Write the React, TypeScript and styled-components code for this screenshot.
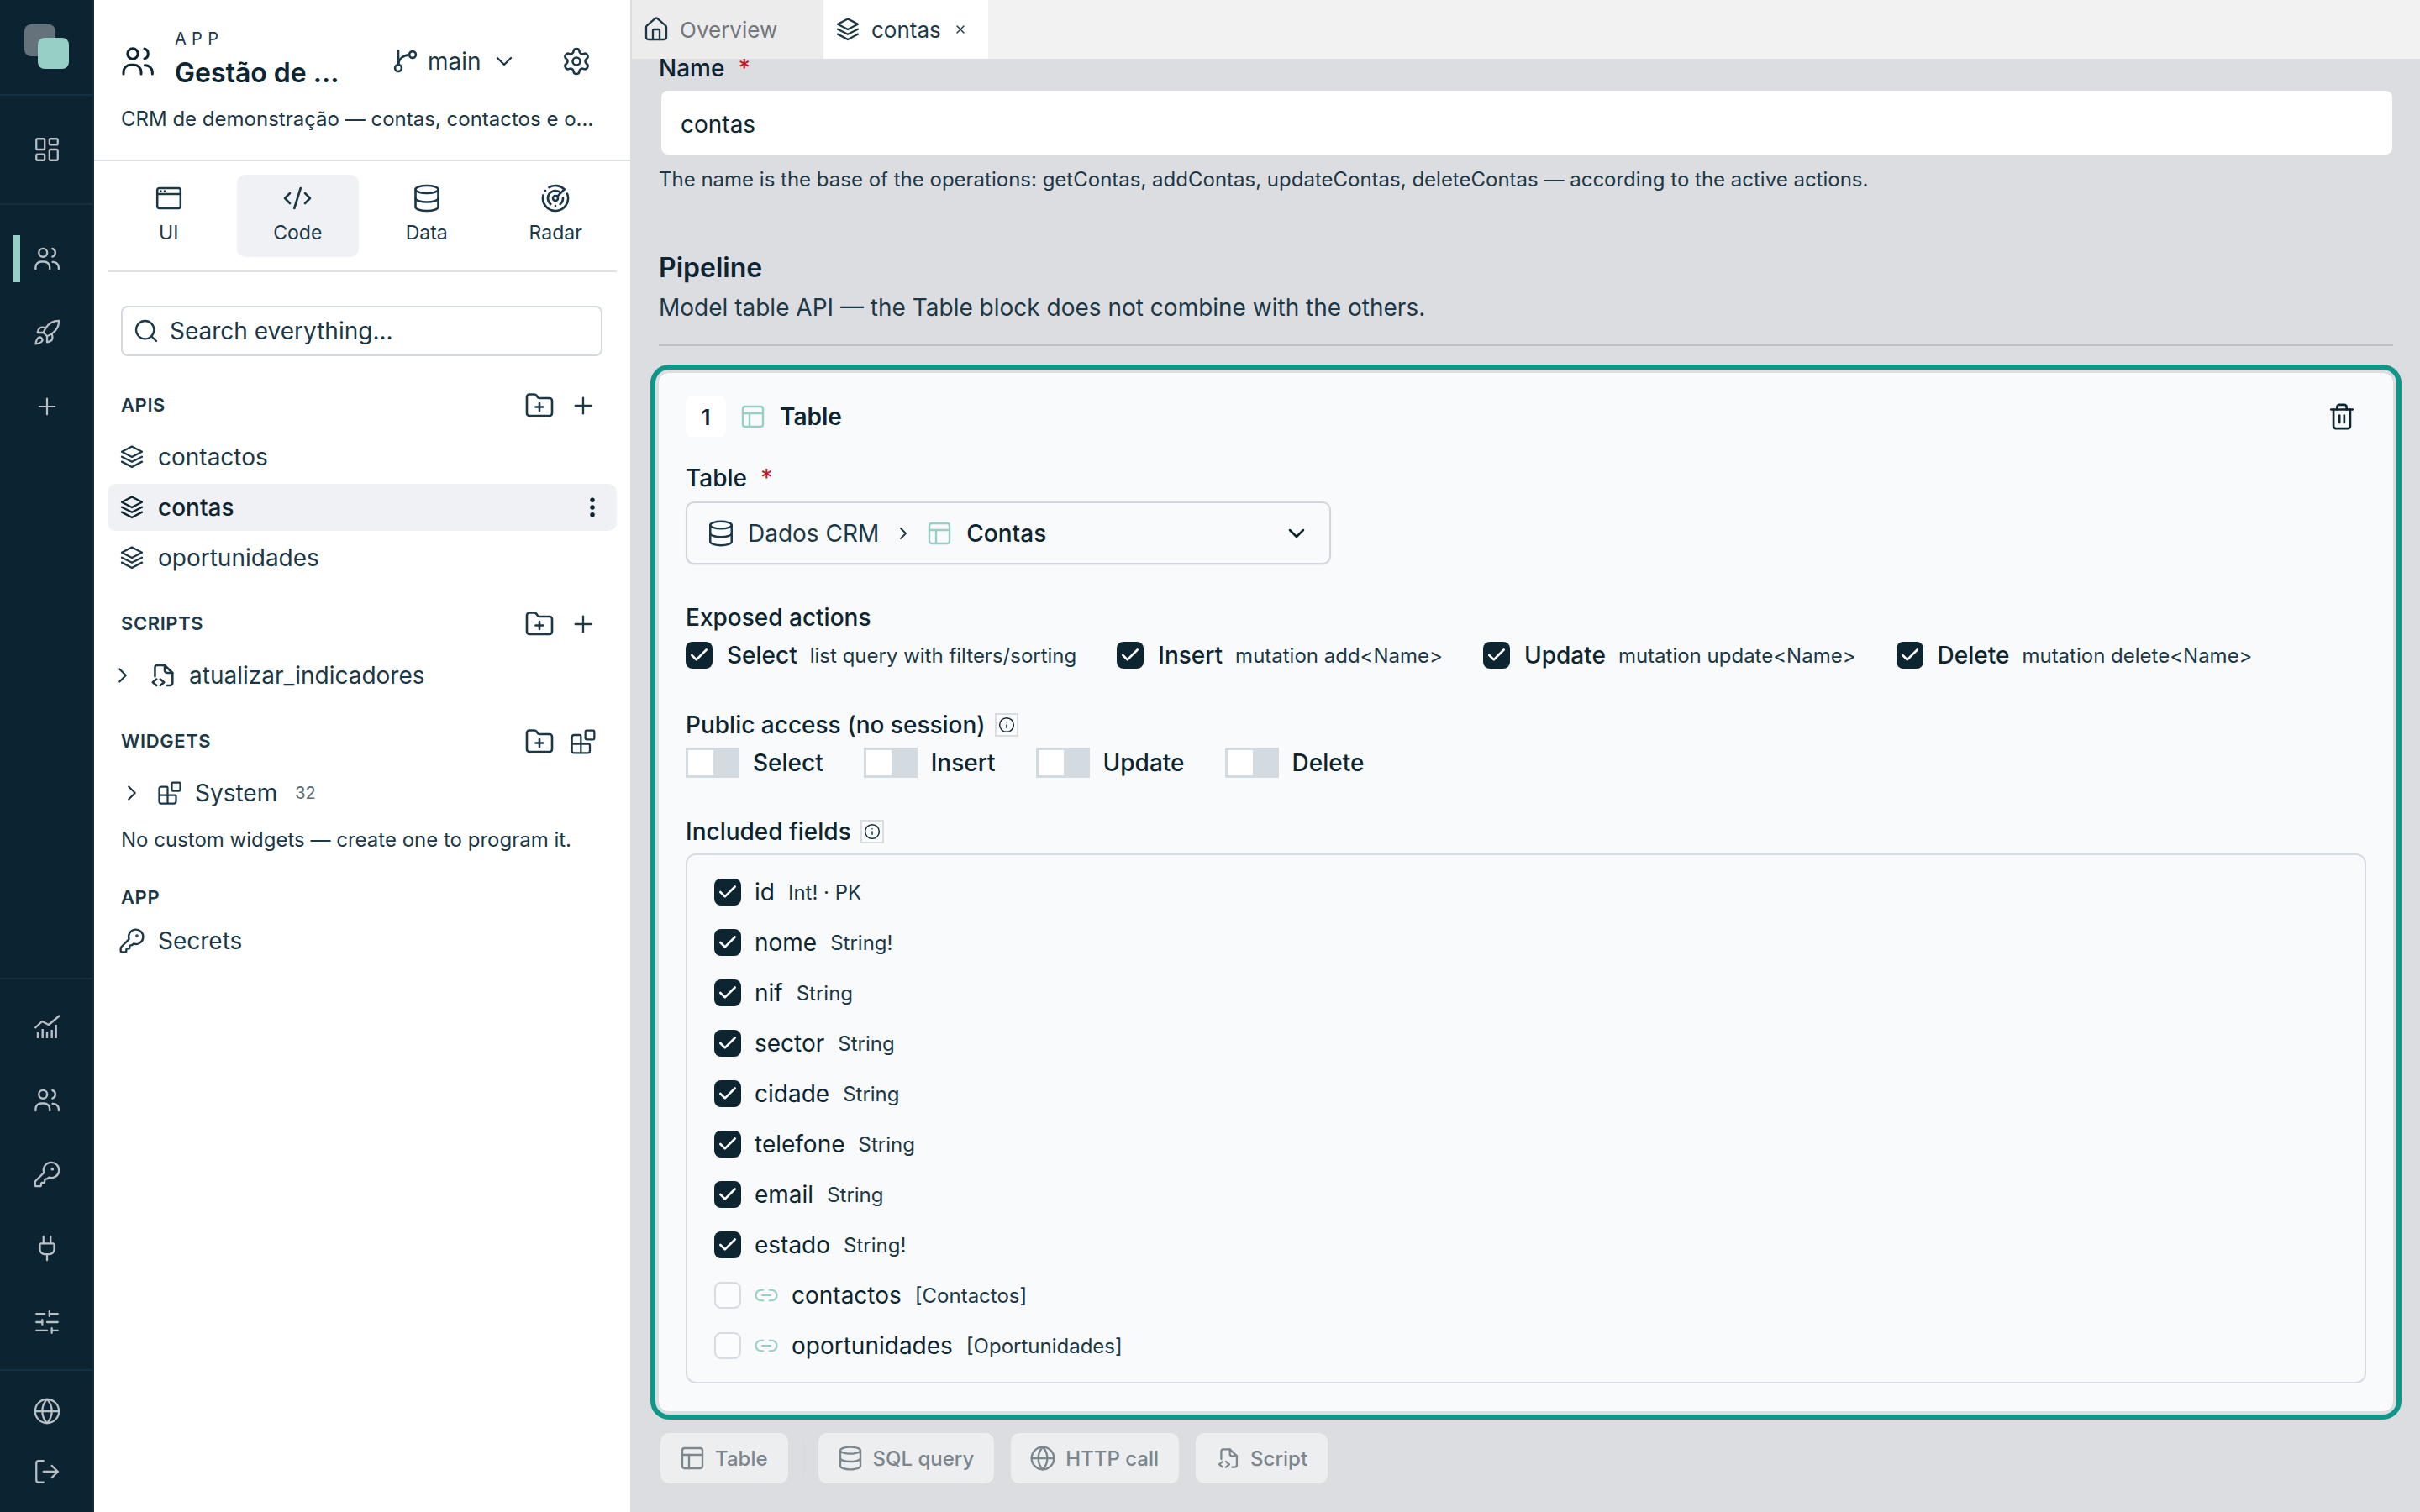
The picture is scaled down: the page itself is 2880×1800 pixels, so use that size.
import React from 'react';
import styled, { createGlobalStyle } from 'styled-components';
import {
  Blocks, Check as CheckGlyph, ChevronDown, ChevronRight, CodeXml, Database, EllipsisVertical, FolderPlus, Globe, House, Info,
  KeyRound, LayoutDashboard, Link2, LogOut, PanelsTopLeft, Plug, Plus, Radar, Rocket, Search as SearchGlyph, Settings, SlidersHorizontal, Trash2, X,
} from 'lucide-react';

const Global = createGlobalStyle`
  html, body { margin: 0; padding: 0; height: 100%; background: #dcdde1; }
  * { box-sizing: border-box; }
  body { font-family: Inter, "Noto Sans", sans-serif; color: #0d2431; }
`;

const Shell = styled.div`display: flex; width: 2880px; height: 1800px; overflow: hidden;`;

const Rail = styled.nav`
  width: 112px; flex: none; background: #0c2431; border-right: 2px solid #122e3d;
  display: flex; flex-direction: column; color: #b8c0c5;
`;
const LogoBox = styled.div`height: 114px; border-bottom: 2px solid #153141; display: flex; flex: none; svg { flex: none; }`;
const RailGroup = styled.div<{ $grow?: boolean; $pad?: number; $border?: boolean }>`
  display: flex; flex-direction: column; flex: ${(p) => (p.$grow ? '1' : 'none')};
  padding: ${(p) => p.$pad ?? 0}px 0; ${(p) => (p.$border ? 'border-bottom: 2px solid #153141;' : '')}
`;
const RailItem = styled.div<{ $h?: number; $active?: boolean }>`
  height: ${(p) => p.$h ?? 88}px; display: flex; align-items: center; justify-content: center; position: relative; padding-left: 2px;
  ${(p) => p.$active ? `&::before { content: ''; position: absolute; left: 16px; top: 16px; width: 8px; height: 56px; background: #97cfc6; }` : ''}
`;

const Sidebar = styled.aside`
  width: 640px; flex: none; background: #fff; border-right: 2px solid #d8dde2; display: flex; flex-direction: column; color: #1c3847;
`;
const SideHeader = styled.header`
  height: 192px; flex: none; border-bottom: 2px solid #dfe2e6; padding: 36px 32px 0 32px;
`;
const TopRow = styled.div`display: flex; align-items: center; height: 73px;`;
const AppIcon = styled.span`display: flex; width: 64px; color: #0d2431; flex: none;`;
const TitleStack = styled.div`display: flex; flex-direction: column; width: 200px; flex: none;`;
const AppTag = styled.div`font-size: 20px; line-height: 20px; letter-spacing: 6.3px; color: #1c3847;`;
const AppTitle = styled.div`font-size: 32px; line-height: 44px; margin-top: 9px; font-weight: 600; color: #0d2431; white-space: nowrap;`;
const BranchBtn = styled.div`display: flex; align-items: center; margin-left: 56px; font-size: 28px; color: #1c3847; flex: none;`;
const BranchName = styled.span`margin: 0 11px 0 9px;`;
const GearBtn = styled.span`display: flex; margin-left: 52px; color: #1c3847;`;
const Desc = styled.div`font-size: 24px; line-height: 36px; margin-top: 15px; white-space: nowrap; color: #1c3847;`;

const ModeTabs = styled.div`
  margin: 16px 16px 0; padding-bottom: 16px; border-bottom: 2px solid #dfe2e6; display: grid; grid-template-columns: repeat(4, 1fr); gap: 8px; flex: none;
`;
const ModeTab = styled.div<{ $active?: boolean }>`
  height: 98px; border-radius: 10px; background: ${(p) => (p.$active ? '#f0f1f4' : 'transparent')};
  display: flex; flex-direction: column; align-items: center; padding-top: 10px; font-size: 23px; line-height: 30px; color: #1c3847;
`;
const ModeLabel = styled.span`margin-top: 8px;`;

const Search = styled.div`
  margin: 40px 33px 0 32px; height: 60px; border: 2px solid #d4d9de; border-radius: 8px; flex: none;
  display: flex; align-items: center; padding-left: 12px; gap: 12px; font-size: 28px; color: #1c3847;
`;
const SectionHead = styled.div<{ $mt: number }>`
  height: 44px; margin: ${(p) => p.$mt}px 40px 0 32px; display: flex; align-items: center; justify-content: space-between;
  font-size: 22px; font-weight: 600; letter-spacing: 0.6px; flex: none; color: #1c3847;
`;
const HeadIcons = styled.div`display: flex; align-items: center; gap: 18px; color: #1c3847; margin-top: 2px;`;
const Row = styled.div<{ $active?: boolean; $mt?: number; $pl?: number; $gap?: number }>`
  height: 56px; margin: ${(p) => p.$mt ?? 0}px 16px 0; padding-left: ${(p) => p.$pl ?? 13}px; padding-right: 14px; border-radius: 10px; display: flex; align-items: center; flex: none;
  gap: ${(p) => p.$gap ?? 15}px; font-size: 28px; white-space: nowrap;
  background: ${(p) => (p.$active ? '#f0f1f4' : 'transparent')}; color: ${(p) => (p.$active ? '#0d2431' : '#1c3847')}; font-weight: ${(p) => (p.$active ? 500 : 400)};
`;
const RowEnd = styled.span`margin-left: auto; display: flex;`;
const CountTag = styled.span`font-size: 20px; color: #5b6d78; margin-left: 6px;`;
const Hint = styled.div`font-size: 24px; line-height: 36px; margin: 10px 0 0 32px; white-space: nowrap; color: #1c3847;`;

const Main = styled.main`flex: 1; min-width: 0; display: flex; flex-direction: column; background: #dcdde1;`;
const TabBar = styled.div`height: 70px; flex: none; background: #f2f2f2; display: flex;`;
const Tab = styled.div<{ $active?: boolean; $w: number }>`
  width: ${(p) => p.$w}px; padding-left: 13px; display: flex; align-items: center; gap: 12px; font-size: 26px;
  background: ${(p) => (p.$active ? '#fff' : '#ececec')}; color: ${(p) => (p.$active ? '#1c3847' : '#71777c')};
`;
const TabIcon = styled.span`display: flex; color: #1c3847;`;
const TabClose = styled.span`display: flex; margin-left: 3px; color: #1c3847;`;
const Content = styled.div`flex: 1; min-height: 0; padding: 0 32px; overflow: hidden;`;
const Label = styled.div<{ $lh?: number }>`font-size: 28px; font-weight: 500; line-height: ${(p) => p.$lh ?? 36}px; display: flex; align-items: center; color: #0d2431;`;
const Req = styled.span`color: #c8141e; margin-left: 16px;`;
const NameInput = styled.div`
  margin: 16px 1px 0 3px; height: 76px; background: #fff; border-radius: 8px; display: flex; align-items: center; padding: 4px 0 0 23px; font-size: 28px;
`;
const Help = styled.div`margin-top: 12px; font-size: 24px; line-height: 36px; color: #1c3847;`;
const PipeTitle = styled.div`margin-top: 67px; font-size: 32px; font-weight: 600; line-height: 40px;`;
const PipeDesc = styled.div`margin-top: 9px; font-size: 28px; line-height: 36px; color: #1c3847;`;
const Rule = styled.div`margin-top: 26px; height: 2px; background: #bbc0c7;`;
const Card = styled.section`
  margin: 28px -4px 0; height: 1244px; border: 4px solid #dddee2; border-radius: 16px; background: #f8fafb;
  box-shadow: 0 0 0 6px #0f9689; padding: 28px 32px 0;
`;
const BlockHead = styled.div`height: 48px; display: flex; align-items: center; font-size: 28px; font-weight: 600;`;
const NumBox = styled.span`width: 48px; height: 48px; background: #fff; border-radius: 8px; display: flex; align-items: center; justify-content: center; font-size: 26px; font-weight: 600;`;
const TealIcon = styled.span<{ $ml: number; $mr: number }>`display: flex; color: #97cfc6; margin: 0 ${(p) => p.$mr}px 0 ${(p) => p.$ml}px;`;
const TrashBtn = styled.span`display: flex; margin-left: auto; margin-right: 12px;`;
const SelectBox = styled.div`
  margin-top: 10px; width: 768px; height: 75px; border: 2px solid #cfd5da; border-radius: 10px; box-shadow: 0 1px 2px #0000000f;
  display: flex; align-items: center; padding-left: 23px; font-size: 28px; color: #1c3847;
`;
const SelectSource = styled.span`margin-left: 15px;`;
const SelectName = styled.span`font-weight: 500; color: #0d2431;`;
const SelectCaret = styled.span`display: flex; margin-left: auto; margin-right: 23px; color: #0d2431;`;
const SepCaret = styled.span`display: flex; margin-left: 17px; color: #1c3847;`;
const Gapped = styled.div<{ $mt: number }>`margin-top: ${(p) => p.$mt}px;`;
const ActionRow = styled.div`margin-top: 11px; display: flex; gap: 48px;`;
const Action = styled.div`display: flex; align-items: center; height: 32px;`;
const Check = styled.span<{ $on?: boolean }>`
  width: 32px; height: 32px; border-radius: 8px; flex: none; display: flex; align-items: center; justify-content: center; color: #fff;
  background: ${(p) => (p.$on ? '#0d2431' : '#fbfcfd')}; border: ${(p) => (p.$on ? 'none' : '2px solid #d6dce2')};
`;
const ActName = styled.span`font-size: 28px; font-weight: 500; margin-left: 17px;`;
const ActDesc = styled.span`font-size: 24px; margin-left: 15px; color: #1c3847;`;
const InfoBox = styled.span`width: 28px; height: 28px; border: 2px solid #d8dde1; margin-left: 11px; display: flex; align-items: center; justify-content: center;`;
const SwitchRow = styled.div`margin-top: 9px; display: flex; gap: 48px;`;
const SwitchItem = styled.div`display: flex; align-items: center; gap: 16px; font-size: 28px; font-weight: 500;`;
const Track = styled.span`width: 64px; height: 36px; background: #d4dbe0; padding: 3px; display: flex;`;
const Thumb = styled.span`width: 30px; height: 30px; background: #fff;`;
const FieldBox = styled.div`
  margin-top: 8px; height: 631px; border: 2px solid #d6dce2; border-radius: 12px; padding: 28px 32px; display: flex; flex-direction: column; gap: 28px;
`;
const FieldRow = styled.div`display: flex; align-items: center; height: 32px; font-size: 28px;`;
const FieldName = styled.span<{ $ml: number }>`margin-left: ${(p) => p.$ml}px; font-weight: 400;`;
const FieldType = styled.span`margin-left: 16px; font-size: 24px; color: #1c3847;`;
const LinkIcon = styled.span`display: flex; color: #97cfc6; margin-left: 15px;`;
const AddRow = styled.div`margin: 22px 0 0 2px; display: flex; align-items: center;`;
const AddBtn = styled.div<{ $ml: number }>`
  height: 60px; margin-left: ${(p) => p.$ml}px; padding: 0 24px 0 22px; border-radius: 10px; background: #edeef0; color: #7b868d; display: flex; align-items: center; gap: 11px; font-size: 24px; font-weight: 500;
`;
const AddSep = styled.span`width: 2px; height: 40px; background: #d9dadf; margin-left: 18px;`;

const LogoSvg = () => (
  <svg width="112" height="112" viewBox="0 0 112 112">
    <rect x="29" y="29" width="37" height="38" rx="8" fill="#65727b" />
    <rect x="45" y="45" width="37" height="37" rx="8" fill="#97cfc6" />
  </svg>
);
const Ic = ({ size, sw = 1.75, children }: { size: number; sw?: number; children: React.ReactNode }) => (
  <svg width={size} height={size} viewBox="0 0 24 24" fill="none" stroke="currentColor" strokeWidth={sw} strokeLinecap="round" strokeLinejoin="round" style={{ flex: 'none' }}>
    {children}
  </svg>
);
const Users = ({ size = 32 }: { size?: number }) => (
  <Ic size={size} sw={1.8}>
    <circle cx="8.4" cy="6.6" r="3.7" />
    <path d="M16.8 3a3.8 3.8 0 0 1 0 7.2" />
    <path d="M1.8 21v-1.4a5 5 0 0 1 5-5h2.6a5 5 0 0 1 5 5V21" />
    <path d="M17 14.9a5 5 0 0 1 5.4 4.7V21" />
  </Ic>
);
const Stack = ({ size = 32 }: { size?: number }) => (
  <Ic size={size}>
    <path d="M12 2.6 21 7.3l-9 4.7-9-4.7z" />
    <path d="m3 11.8 9 4.5 9-4.5" />
    <path d="m3 16.2 9 4.8 9-4.8" />
  </Ic>
);
const BranchIcon = () => (
  <Ic size={36} sw={1.75}>
    <circle cx="6.67" cy="17.3" r="2.6" />
    <circle cx="18" cy="6.67" r="2.6" />
    <path d="M6.67 3.6v11.1" />
    <path d="M15.4 6.9C10.5 7.2 7 10 6.67 14.7" />
  </Ic>
);
const FileCode = ({ size = 36 }: { size?: number }) => (
  <Ic size={size} sw={1.7}>
    <path d="M6.3 12.8V5.8A1.8 1.8 0 0 1 8.1 4H14l6.2 6v8a2 2 0 0 1-2 2H16" />
    <path d="M14 4v4a2 2 0 0 0 2 2h4.2" />
    <path d="m7.5 15-3 2.5 3 2.5" />
    <path d="m10.5 15 3 2.5-3 2.5" />
  </Ic>
);
const WindowIcon = () => (
  <Ic size={36} sw={1.7}>
    <rect x="2.8" y="4" width="18.4" height="16" rx="1.6" />
    <path d="M2.8 8.6h18.4" />
    <path d="M5.6 6.3h.01M8.6 6.3h.01" />
  </Ic>
);
const ChartIcon = () => (
  <svg width="32" height="32" viewBox="0 0 32 32" fill="none" stroke="currentColor" strokeWidth="2.4">
    <path d="M1.5 18 10 10l8 4L31 3" strokeLinejoin="round" />
    <path d="M5 30v-7M10.7 30V19M16 30v-8M21.7 30V20M26.7 30V14" />
  </svg>
);

const fields: [string, string][] = [
  ['id', 'Int! · PK'], ['nome', 'String!'], ['nif', 'String'], ['sector', 'String'], ['cidade', 'String'],
  ['telefone', 'String'], ['email', 'String'], ['estado', 'String!'],
];
const CheckOn = () => <Check $on><CheckGlyph size={26} strokeWidth={2.4} /></Check>;

export default function App() {
  return (
    <Shell>
      <Global />
      <Rail>
        <LogoBox><LogoSvg /></LogoBox>
        <RailGroup $border><RailItem $h={128}><LayoutDashboard size={34} strokeWidth={1.6} /></RailItem></RailGroup>
        <RailGroup $grow $pad={20} $border>
          <RailItem $active><Users /></RailItem>
          <RailItem><Rocket size={34} strokeWidth={1.6} /></RailItem>
          <RailItem><Plus size={32} strokeWidth={1.6} /></RailItem>
        </RailGroup>
        <RailGroup $pad={12} $border>
          <RailItem><ChartIcon /></RailItem>
          <RailItem><Users /></RailItem>
          <RailItem><KeyRound size={34} strokeWidth={1.6} /></RailItem>
          <RailItem><Plug size={34} strokeWidth={1.6} /></RailItem>
          <RailItem><SlidersHorizontal size={34} strokeWidth={1.6} /></RailItem>
        </RailGroup>
        <RailGroup $pad={12}>
          <RailItem $h={72}><Globe size={34} strokeWidth={1.6} /></RailItem>
          <RailItem $h={72}><LogOut size={34} strokeWidth={1.6} /></RailItem>
        </RailGroup>
      </Rail>
      <Sidebar>
        <SideHeader>
          <TopRow>
            <AppIcon><Users size={40} /></AppIcon>
            <TitleStack>
              <AppTag>APP</AppTag>
              <AppTitle>Gestão de ...</AppTitle>
            </TitleStack>
            <BranchBtn><BranchIcon /><BranchName>main</BranchName><ChevronDown size={32} strokeWidth={1.75} /></BranchBtn>
            <GearBtn><Settings size={36} strokeWidth={1.75} /></GearBtn>
          </TopRow>
          <Desc>CRM de demonstração — contas, contactos e o...</Desc>
        </SideHeader>
        <ModeTabs>
          <ModeTab><WindowIcon /><ModeLabel>UI</ModeLabel></ModeTab>
          <ModeTab $active><CodeXml size={36} strokeWidth={1.75} /><ModeLabel>Code</ModeLabel></ModeTab>
          <ModeTab><Database size={36} strokeWidth={1.75} /><ModeLabel>Data</ModeLabel></ModeTab>
          <ModeTab><Radar size={36} strokeWidth={1.75} /><ModeLabel>Radar</ModeLabel></ModeTab>
        </ModeTabs>
        <Search><SearchGlyph size={32} strokeWidth={1.75} />Search everything...</Search>
        <SectionHead $mt={36}>APIS<HeadIcons><FolderPlus size={36} strokeWidth={1.75} /><Plus size={32} strokeWidth={1.75} /></HeadIcons></SectionHead>
        <Row $mt={12}><Stack />contactos</Row>
        <Row $mt={4} $active><Stack />contas<RowEnd><EllipsisVertical size={30} strokeWidth={2.4} /></RowEnd></Row>
        <Row $mt={4}><Stack />oportunidades</Row>
        <SectionHead $mt={28}>SCRIPTS<HeadIcons><FolderPlus size={36} strokeWidth={1.75} /><Plus size={32} strokeWidth={1.75} /></HeadIcons></SectionHead>
        <Row $mt={12} $pl={3} $gap={14}><ChevronRight size={30} strokeWidth={1.75} /><FileCode />atualizar_indicadores</Row>
        <SectionHead $mt={28}>WIDGETS<HeadIcons><FolderPlus size={36} strokeWidth={1.75} /><Blocks size={32} strokeWidth={1.7} /></HeadIcons></SectionHead>
        <Row $mt={12} $pl={14} $gap={15}><ChevronRight size={30} strokeWidth={1.75} /><Blocks size={30} strokeWidth={1.8} />System<CountTag>32</CountTag></Row>
        <Hint>No custom widgets — create one to program it.</Hint>
        <SectionHead $mt={28}>APP</SectionHead>
        <Row $mt={2}><KeyRound size={32} strokeWidth={1.75} />Secrets</Row>
      </Sidebar>
      <Main>
        <TabBar>
          <Tab $w={228}><TabIcon><House size={32} strokeWidth={1.75} /></TabIcon>Overview</Tab>
          <Tab $w={196} $active><TabIcon><Stack /></TabIcon>contas<TabClose><X size={16} strokeWidth={2} /></TabClose></Tab>
        </TabBar>
        <Content>
          <Label $lh={22}>Name<Req>*</Req></Label>
          <NameInput>contas</NameInput>
          <Help>The name is the base of the operations: getContas, addContas, updateContas, deleteContas — according to the active actions.</Help>
          <PipeTitle>Pipeline</PipeTitle>
          <PipeDesc>Model table API — the Table block does not combine with the others.</PipeDesc>
          <Rule />
          <Card>
            <BlockHead>
              <NumBox>1</NumBox>
              <TealIcon $ml={16} $mr={16}><PanelsTopLeft size={32} strokeWidth={1.75} /></TealIcon>
              Table
              <TrashBtn><Trash2 size={34} strokeWidth={1.9} /></TrashBtn>
            </BlockHead>
            <Gapped $mt={31}>
              <Label>Table<Req>*</Req></Label>
              <SelectBox>
                <Database size={34} strokeWidth={1.75} />
                <SelectSource>Dados CRM</SelectSource>
                <SepCaret><ChevronRight size={24} strokeWidth={1.9} /></SepCaret>
                <TealIcon $ml={15} $mr={16}><PanelsTopLeft size={32} strokeWidth={1.75} /></TealIcon>
                <SelectName>Contas</SelectName>
                <SelectCaret><ChevronDown size={32} strokeWidth={1.9} /></SelectCaret>
              </SelectBox>
            </Gapped>
            <Gapped $mt={45}>
              <Label>Exposed actions</Label>
              <ActionRow>
                <Action><CheckOn /><ActName>Select</ActName><ActDesc>list query with filters/sorting</ActDesc></Action>
                <Action><CheckOn /><ActName>Insert</ActName><ActDesc>mutation add&lt;Name&gt;</ActDesc></Action>
                <Action><CheckOn /><ActName>Update</ActName><ActDesc>mutation update&lt;Name&gt;</ActDesc></Action>
                <Action><CheckOn /><ActName>Delete</ActName><ActDesc>mutation delete&lt;Name&gt;</ActDesc></Action>
              </ActionRow>
            </Gapped>
            <Gapped $mt={49}>
              <Label>Public access (no session)<InfoBox><Info size={20} strokeWidth={1.75} /></InfoBox></Label>
              <SwitchRow>
                {['Select', 'Insert', 'Update', 'Delete'].map((s) => (
                  <SwitchItem key={s}><Track><Thumb /></Track>{s}</SwitchItem>
                ))}
              </SwitchRow>
            </Gapped>
            <Gapped $mt={46}>
              <Label>Included fields<InfoBox><Info size={20} strokeWidth={1.75} /></InfoBox></Label>
              <FieldBox>
                {fields.map(([n, t]) => (
                  <FieldRow key={n}><CheckOn /><FieldName $ml={16}>{n}</FieldName><FieldType>{t}</FieldType></FieldRow>
                ))}
                <FieldRow><Check /><LinkIcon><Link2 size={30} strokeWidth={1.75} /></LinkIcon><FieldName $ml={15}>contactos</FieldName><FieldType>[Contactos]</FieldType></FieldRow>
                <FieldRow><Check /><LinkIcon><Link2 size={30} strokeWidth={1.75} /></LinkIcon><FieldName $ml={15}>oportunidades</FieldName><FieldType>[Oportunidades]</FieldType></FieldRow>
              </FieldBox>
            </Gapped>
          </Card>
          <AddRow>
            <AddBtn $ml={0}><PanelsTopLeft size={32} strokeWidth={1.75} />Table</AddBtn>
            <AddSep />
            <AddBtn $ml={16}><Database size={32} strokeWidth={1.75} />SQL query</AddBtn>
            <AddBtn $ml={20}><Globe size={32} strokeWidth={1.75} />HTTP call</AddBtn>
            <AddBtn $ml={20}><FileCode size={32} />Script</AddBtn>
          </AddRow>
        </Content>
      </Main>
    </Shell>
  );
}
